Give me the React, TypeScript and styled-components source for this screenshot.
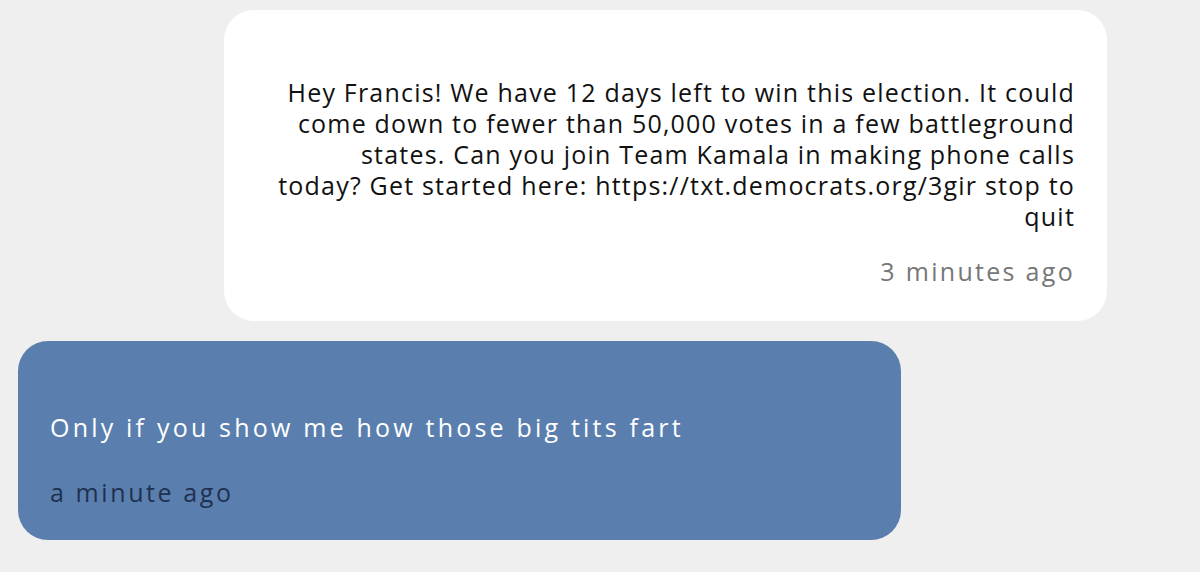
import React from "react";
import styled, { createGlobalStyle } from "styled-components";

const GlobalStyle = createGlobalStyle`
  html, body {
    margin: 0;
    padding: 0;
    background: #efefef;
  }
  body {
    font-family: "Open Sans", "Noto Sans", sans-serif;
  }
`;

const Thread = styled.main`
  display: flex;
  flex-direction: column;
  gap: 20px;
  padding: 10px 93px 0 18px;
`;

const Bubble = styled.div<{ $mine?: boolean }>`
  box-sizing: border-box;
  width: 883px;
  align-self: ${(p) => (p.$mine ? "flex-start" : "flex-end")};
  background: ${(p) => (p.$mine ? "#5a7fae" : "#ffffff")};
  border-radius: 30px;
  padding: ${(p) => (p.$mine ? "71px 32px 32px" : "67px 32px 34px")};
  display: flex;
  flex-direction: column;
  gap: ${(p) => (p.$mine ? "34px" : "24px")};
  text-align: ${(p) => (p.$mine ? "left" : "right")};
`;

const Body = styled.p<{ $mine?: boolean }>`
  margin: 0;
  font-size: 25px;
  line-height: 31px;
  letter-spacing: ${(p) => (p.$mine ? "3.2px" : "1.2px")};
  color: ${(p) => (p.$mine ? "#ffffff" : "#111111")};
  white-space: nowrap;
`;

const Stamp = styled.span<{ $mine?: boolean }>`
  font-size: 25px;
  line-height: 31px;
  letter-spacing: ${(p) => (p.$mine ? "2.6px" : "2.3px")};
  color: ${(p) => (p.$mine ? "#1f3150" : "#777777")};
`;

export default function App() {
  return (
    <>
      <GlobalStyle />
      <Thread>
        <Bubble>
          <Body>
            Hey Francis! We have 12 days left to win this election. It could
            <br />
            come down to fewer than 50,000 votes in a few battleground
            <br />
            states. Can you join Team Kamala in making phone calls
            <br />
            today? Get started here: https://txt.democrats.org/3gir stop to
            <br />
            quit
          </Body>
          <Stamp>3 minutes ago</Stamp>
        </Bubble>
        <Bubble $mine>
          <Body $mine>Only if you show me how those big tits fart</Body>
          <Stamp $mine>a minute ago</Stamp>
        </Bubble>
      </Thread>
    </>
  );
}
